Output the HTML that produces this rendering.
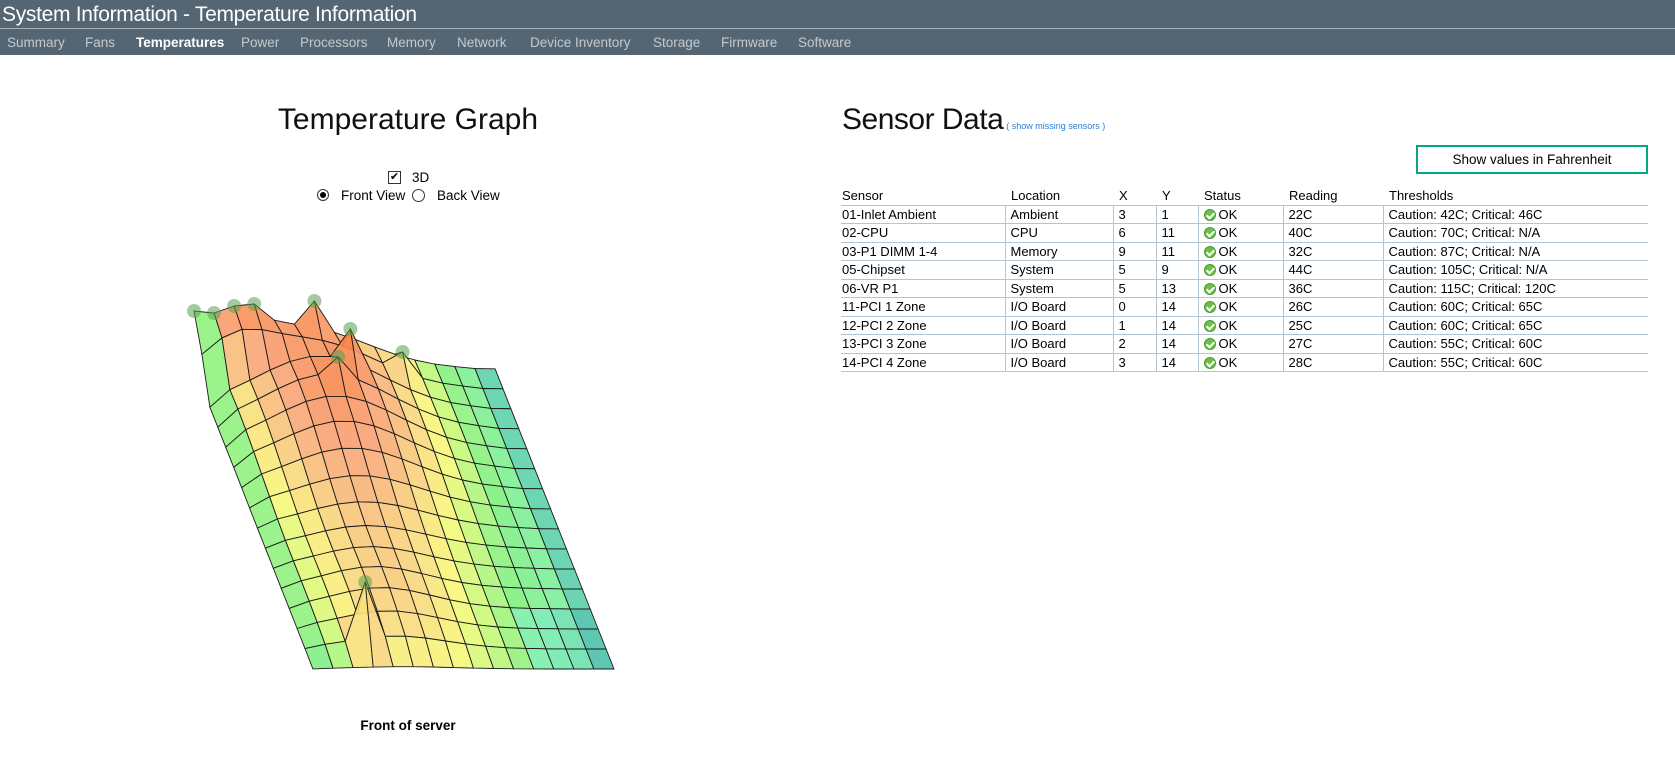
<!DOCTYPE html>
<html><head><meta charset="utf-8"><style>
body{margin:0;width:1675px;height:784px;background:#fff;font-family:"Liberation Sans",sans-serif;position:relative;overflow:hidden}
.hdr{position:absolute;left:0;top:0;width:1675px;height:55px;background:#546673}
.ttl{position:absolute;left:2px;top:3px;color:#fff;font-size:21px;letter-spacing:-0.3px}
.line{position:absolute;left:0;top:28px;width:1675px;height:1px;background:#a9b0b5}
.nav{position:absolute;top:35px;color:#c3cad0;font-size:13.5px}
.nav.a{color:#fff;font-weight:bold}
.a1{position:absolute;font-size:13.5px;color:#000}
table{position:absolute;left:841px;top:187px;border-collapse:collapse;font-size:13px;width:807px}
td{height:17.5px;padding:0 0 0 1px;border-bottom:1px solid #b5c4d2;white-space:nowrap;line-height:17px}
td+td{border-left:1px solid #b5c4d2;padding-left:5px}
tr.h td{border:none;border-bottom:1px solid #b5c4d2;padding-left:1px}
tr.h td+td{padding-left:6px}
.ok{display:inline-block;width:12px;height:12px;border-radius:50%;background:#6cc04a;vertical-align:-2px;margin-right:3px;position:relative;border:1px solid #4a9a30;box-sizing:border-box}
.ok:after{content:"";position:absolute;left:3px;top:1px;width:3px;height:6px;border:solid #fff;border-width:0 2px 2px 0;transform:rotate(45deg)}
</style></head><body>
<div class="hdr"><div class="ttl">System Information - Temperature Information</div><div class="line"></div>
<span class="nav" style="left:7px">Summary</span><span class="nav" style="left:85px">Fans</span><span class="nav a" style="left:136px">Temperatures</span><span class="nav" style="left:241px">Power</span><span class="nav" style="left:300px">Processors</span><span class="nav" style="left:387px">Memory</span><span class="nav" style="left:457px">Network</span><span class="nav" style="left:530px">Device Inventory</span><span class="nav" style="left:653px">Storage</span><span class="nav" style="left:721px">Firmware</span><span class="nav" style="left:798px">Software</span>
</div>
<div style="position:absolute;left:208px;width:400px;top:103px;text-align:center;font-size:30px;color:#111">Temperature Graph</div>
<div style="position:absolute;left:388px;top:171px;width:11px;height:11px;border:1px solid #333;font-size:11px;line-height:11px;text-align:center">✔</div>
<div class="a1" style="left:412px;top:170px">3D</div>
<div style="position:absolute;left:317px;top:189px;width:10px;height:10px;border:1px solid #333;border-radius:50%"><div style="margin:2px;width:6px;height:6px;border-radius:50%;background:#000"></div></div>
<div class="a1" style="left:341px;top:188px">Front View</div>
<div style="position:absolute;left:412px;top:189px;width:11px;height:11px;border:1px solid #333;border-radius:50%"></div>
<div class="a1" style="left:437px;top:188px">Back View</div>
<svg id="g" width="700" height="784" style="position:absolute;left:0;top:0"></svg>
<div style="position:absolute;left:208px;width:400px;top:718px;text-align:center;font-size:13.5px;font-weight:bold">Front of server</div>
<div style="position:absolute;left:842px;top:103px;font-size:30px;color:#111;white-space:nowrap;letter-spacing:-0.5px">Sensor Data<span style="font-size:9px;color:#2a7fd4;letter-spacing:0;margin-left:3px">( show missing sensors )</span></div>
<div style="position:absolute;left:1416px;top:145px;width:228px;height:25px;border:2px solid #01a982;text-align:center;line-height:25px;font-size:13.5px">Show values in Fahrenheit</div>
<table>
<colgroup><col style="width:164px"><col style="width:108px"><col style="width:43px"><col style="width:42px"><col style="width:85px"><col style="width:100px"><col></colgroup>
<tr class="h"><td>Sensor</td><td>Location</td><td>X</td><td>Y</td><td>Status</td><td>Reading</td><td>Thresholds</td></tr>
<tr><td>01-Inlet Ambient</td><td>Ambient</td><td>3</td><td>1</td><td><span class="ok"></span>OK</td><td>22C</td><td>Caution: 42C; Critical: 46C</td></tr>
<tr><td>02-CPU</td><td>CPU</td><td>6</td><td>11</td><td><span class="ok"></span>OK</td><td>40C</td><td>Caution: 70C; Critical: N/A</td></tr>
<tr><td>03-P1 DIMM 1-4</td><td>Memory</td><td>9</td><td>11</td><td><span class="ok"></span>OK</td><td>32C</td><td>Caution: 87C; Critical: N/A</td></tr>
<tr><td>05-Chipset</td><td>System</td><td>5</td><td>9</td><td><span class="ok"></span>OK</td><td>44C</td><td>Caution: 105C; Critical: N/A</td></tr>
<tr><td>06-VR P1</td><td>System</td><td>5</td><td>13</td><td><span class="ok"></span>OK</td><td>36C</td><td>Caution: 115C; Critical: 120C</td></tr>
<tr><td>11-PCI 1 Zone</td><td>I/O Board</td><td>0</td><td>14</td><td><span class="ok"></span>OK</td><td>26C</td><td>Caution: 60C; Critical: 65C</td></tr>
<tr><td>12-PCI 2 Zone</td><td>I/O Board</td><td>1</td><td>14</td><td><span class="ok"></span>OK</td><td>25C</td><td>Caution: 60C; Critical: 65C</td></tr>
<tr><td>13-PCI 3 Zone</td><td>I/O Board</td><td>2</td><td>14</td><td><span class="ok"></span>OK</td><td>27C</td><td>Caution: 55C; Critical: 60C</td></tr>
<tr><td>14-PCI 4 Zone</td><td>I/O Board</td><td>3</td><td>14</td><td><span class="ok"></span>OK</td><td>28C</td><td>Caution: 55C; Critical: 60C</td></tr>
</table>
<script>
var N=15,H=[];
function b(i,j){return 55*Math.exp(-((i-5.5)*(i-5.5)/20+(j-3)*(j-3)/30))+18*Math.exp(-((i-4.5)*(i-4.5)/12+(j-12)*(j-12)/10))+(j<=1?35*Math.exp(-((i-1.5)*(i-1.5)/6)):0);}
for(var i=0;i<=N;i++){H[i]=[];for(var j=0;j<=N;j++){var v=b(i,j);if(j>=15)v*=0.3;if(i>=14)v*=0.4;if(i==0&&j>=2)v*=0.15;H[i][j]=v;}}
var sp=[[0,0,58],[1,0,56],[2,0,63],[3,0,65],[6,0,68],[7,2,80],[6,3,72],[10,1,37],[3,14,67]];
sp.forEach(function(s){H[s[0]][s[1]]=s[2];});
function P(i,j){return [194+20.07*i+7.93*j,369+20*j-H[i][j]];}
var stops=[[0,[76,192,168]],[8,[122,240,176]],[16,[128,240,128]],[24,[200,248,120]],[32,[248,248,120]],[46,[248,215,125]],[60,[248,180,120]],[72,[248,160,115]],[90,[248,135,75]]];
function col(h){if(h<0)h=0;for(var k=1;k<stops.length;k++){if(h<=stops[k][0]){var a=stops[k-1],c=stops[k],t=(h-a[0])/(c[0]-a[0]);return 'rgb('+[0,1,2].map(function(m){return Math.round(a[1][m]+(c[1][m]-a[1][m])*t)}).join(',')+')';}}return 'rgb(248,135,75)';}
var s='';
for(var j=0;j<N;j++)for(var i=0;i<N;i++){var q=[P(i,j),P(i+1,j),P(i+1,j+1),P(i,j+1)];var h=(H[i][j]+H[i+1][j]+H[i+1][j+1]+H[i][j+1])/4;
var ci=i+0.5,cj=j+0.5;
var c=h+18*Math.exp(-(ci-5)*(ci-5)/14)+7*Math.exp(-(ci-9)*(ci-9)/12)+10-(i>=14?8:0)-((j>=12&&i>=11)?6:0);
if(i==0)c=Math.min(c,18);
s+='<polygon points="'+q.map(function(p){return p[0].toFixed(1)+','+p[1].toFixed(1)}).join(' ')+'" fill="'+col(c)+'" fill-opacity="0.9" stroke="#1a1a1a" stroke-width="0.9"/>';}
sp.forEach(function(x){var p=P(x[0],x[1]);s+='<circle cx="'+p[0]+'" cy="'+p[1]+'" r="7" fill="rgb(90,160,80)" fill-opacity="0.55"/>';});
document.getElementById('g').innerHTML=s;
</script>
</body></html>
